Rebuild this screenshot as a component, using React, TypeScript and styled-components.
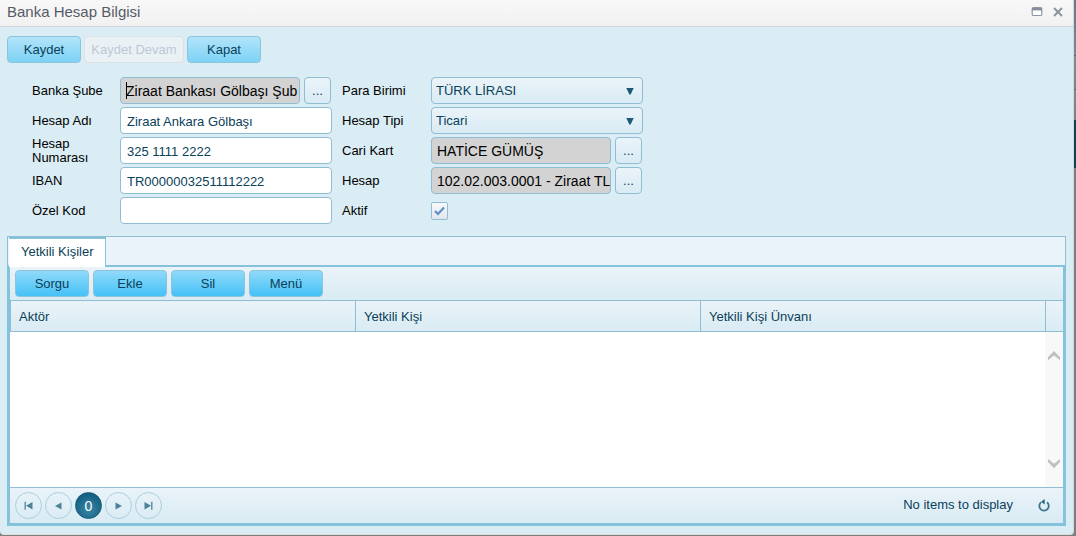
import React, { useState } from 'react';
import styled, { createGlobalStyle, css } from 'styled-components';

const Global = createGlobalStyle`
  *, *::before, *::after { box-sizing: border-box; }
  html, body { margin: 0; padding: 0; }
  body { background: #7d7f82; font-family: "Liberation Sans", Arial, sans-serif; font-size: 13px; color: #000; }
  button, input, select { font-family: inherit; margin: 0; }
`;

const line = '#8fbdd2';
const frame = '#85c3dd';
const ink = '#0a4159';
const panel = 'linear-gradient(#eaf3f9, #d9ebf3)';

const Backdrop = styled.div`
  min-height: 100vh;
  padding: 0 2px 1px 0;
  display: flex;
  background: linear-gradient(#6f7780, #7f8892 55px, #4f6f7d 55px 56px, #858a90 56px, #7d8287 89px, #4f6f7d 89px 90px, #858687 90px, #7f8081 120px, #143f55 120px 168px, #807d7c 168px);
`;

const Window = styled.main`
  flex: 1;
  min-width: 0;
  display: flex;
  flex-direction: column;
  background: #daecf4;
  border-right: 1px solid #c9dbe3;
  border-bottom: 1px solid #d9dddf;
  border-radius: 0 0 4px 4px;
`;

const TitleBar = styled.header`
  display: flex;
  align-items: center;
  height: 27px;
  padding: 0 9px 2px 7px;
  background: linear-gradient(#f8f8f8, #f1f1f1);
  border-bottom: 1px solid #d3d6d8;
`;

const Title = styled.h1`
  flex: 1;
  margin: 0;
  font-size: 15px;
  font-weight: 400;
  line-height: 20px;
  color: #555b66;
`;

const TitleTools = styled.div`
  display: flex;
  gap: 9px;
`;

const bare = css`
  display: flex;
  align-items: center;
  justify-content: center;
  padding: 0;
  border: 0;
  background: none;
  cursor: pointer;
`;

const TitleButton = styled.button`
  ${bare}
  width: 12px;
  height: 12px;
`;

const Toolbar = styled.div`
  display: flex;
  gap: 3px;
  padding: 9px 7px 0;
`;

const Button = styled.button<{ $strong?: boolean; $wide?: boolean }>`
  width: ${p => (p.$wide ? 100 : 74)}px;
  height: 27px;
  padding: 0;
  border: 1px solid #8fc3da;
  border-radius: 4px;
  background: ${p => (p.$strong ? 'linear-gradient(#90dafa, #45c1f6)' : 'linear-gradient(#b2e4fa, #7dd2f6)')};
  color: ${ink};
  font-size: 13px;
  line-height: ${p => (p.$strong ? 24 : 26)}px;
  white-space: nowrap;
  &:disabled {
    background: #eaf1f5;
    border-color: #dbe1e6;
    color: #bcc8d6;
  }
`;

const Form = styled.form`
  display: grid;
  grid-template-columns: 88px 212px 99px 212px;
  grid-template-rows: repeat(5, 27px);
  row-gap: 3px;
  align-items: center;
  padding: 14px 0 12px 32px;
`;

const Label = styled.label<{ $second?: boolean }>`
  padding-left: ${p => (p.$second ? 10 : 0)}px;
  font-size: 13px;
  line-height: 14px;
`;

const fieldBox = css`
  height: 27px;
  border: 1px solid ${line};
  border-radius: 4px;
  font-size: 13px;
  color: ${ink};
  outline: 0;
`;

const TextInput = styled.input`
  ${fieldBox}
  width: 100%;
  padding: 1px 6px 0;
  background: #fff;
`;

const Lookup = styled.div`
  display: flex;
  gap: 4px;
  padding-right: 1px;
`;

const LookupBox = styled.div`
  position: relative;
  flex: 1;
  min-width: 0;
`;

const LookupInput = styled.input`
  ${fieldBox}
  width: 100%;
  padding: 0 0 0 5px;
  background: #d3d3d3;
  color: #000;
  font-size: 14px;
`;

const Caret = styled.span`
  position: absolute;
  left: 6px;
  top: 5px;
  width: 1px;
  height: 17px;
  background: #000;
`;

const DotsButton = styled.button`
  width: 27px;
  height: 27px;
  padding: 0;
  border: 1px solid ${line};
  border-radius: 4px;
  background: ${panel};
  color: ${ink};
  font-size: 13px;
`;

const SelectWrap = styled.div`
  position: relative;
`;

const Select = styled.select`
  ${fieldBox}
  width: 100%;
  padding: 0 24px 0 4px;
  appearance: none;
  background: ${panel};
`;

const SelectArrow = styled.svg`
  position: absolute;
  right: 9px;
  top: 11px;
  pointer-events: none;
`;

const Check = styled.input`
  appearance: none;
  display: block;
  width: 17px;
  height: 18px;
  margin: 0;
  border: 1px solid ${line};
  border-radius: 2px;
  background: linear-gradient(#f7f9fb, #e2e6ed);
`;

const CheckWrap = styled.div`
  position: relative;
`;

const CheckMark = styled.svg`
  position: absolute;
  left: 3px;
  top: 4px;
  pointer-events: none;
`;

const Tabs = styled.section`
  flex: 1;
  display: flex;
  flex-direction: column;
  margin: 0 7px 8px;
`;

const TabStrip = styled.div`
  display: flex;
  height: 29px;
  padding-left: 1px;
  background: #eaf3fa;
  border: 1px solid ${line};
  border-bottom: 0;
`;

const Tab = styled.button`
  height: 30px;
  padding: 0 11px 4px 12px;
  border: 0;
  border-top: 2px solid ${frame};
  border-right: 1px solid ${frame};
  background: #fff;
  color: ${ink};
  font-size: 13px;
  z-index: 1;
`;

const TabPanel = styled.div`
  flex: 1;
  display: flex;
  flex-direction: column;
  border: 3px solid ${frame};
  border-top-width: 2px;
  background: #fff;
`;

const GridToolbar = styled.div`
  display: flex;
  gap: 4px;
  height: 33px;
  padding: 3px 5px;
  background: ${panel};
`;

const Table = styled.table`
  width: 100%;
  table-layout: fixed;
  border-collapse: separate;
  border-spacing: 0;
  background: ${panel};
  border-top: 1px solid ${line};
  border-bottom: 1px solid ${line};
`;

const Th = styled.th`
  height: 30px;
  padding: 0 8px;
  border-left: 1px solid ${line};
  text-align: left;
  font-size: 13px;
  font-weight: 400;
  color: ${ink};
`;

const GutterTh = styled.th`
  width: 18px;
  padding: 0;
  border-left: 1px solid ${line};
`;

const GridBody = styled.div`
  flex: 1;
  min-height: 155px;
  display: flex;
  justify-content: flex-end;
`;

const ScrollTrack = styled.div`
  width: 18px;
  display: flex;
  flex-direction: column;
  justify-content: space-between;
  padding: 17px 0;
  background: #f8f8f8;
`;

const ScrollButton = styled.button`
  ${bare}
  width: 18px;
  height: 12px;
`;

const Pager = styled.footer`
  display: flex;
  align-items: center;
  gap: 3px;
  height: 36px;
  padding: 0 12px 0 5px;
  background: ${panel};
  border-top: 1px solid ${line};
`;

const PageButton = styled.button<{ $current?: boolean }>`
  ${bare}
  width: 27px;
  height: 27px;
  border: 1px solid ${p => (p.$current ? '#135c7d' : '#a9cfdf')};
  border-radius: 50%;
  background: ${p => (p.$current ? 'radial-gradient(circle at 50% 65%, #3d87a5, #135f82 75%)' : 'transparent')};
  color: #fff;
  font-size: 14px;
`;

const PagerInfo = styled.span`
  margin-left: auto;
  margin-right: 21px;
  color: ${ink};
  line-height: 16px;
  padding-bottom: 1px;
`;

const RefreshButton = styled.button`
  ${bare}
  width: 14px;
  height: 14px;
`;

function Icon({ w, h, children }: { w: number; h: number; children: React.ReactNode }) {
  return <svg width={w} height={h} viewBox={`0 0 ${w} ${h}`} aria-hidden="true">{children}</svg>;
}

function LookupField({ id, value, caret }: { id: string; value: string; caret?: boolean }) {
  return (
    <Lookup>
      <LookupBox>
        <LookupInput id={id} readOnly value={value} />
        {caret && <Caret />}
      </LookupBox>
      <DotsButton type="button">...</DotsButton>
    </Lookup>
  );
}

function SelectField({ id, options }: { id: string; options: string[] }) {
  return (
    <SelectWrap>
      <Select id={id}>
        {options.map(o => <option key={o}>{o}</option>)}
      </Select>
      <SelectArrow width="8" height="7" viewBox="0 0 8 7"><path d="M0.3 0H7.7L4.6 6.5H3.4Z" fill="#1a5a75" /></SelectArrow>
    </SelectWrap>
  );
}

export default function App() {
  const [active, setActive] = useState(true);
  const columns = ['Aktör', 'Yetkili Kişi', 'Yetkili Kişi Ünvanı'];
  return (
    <>
      <Global />
      <Backdrop>
        <Window>
          <TitleBar>
            <Title>Banka Hesap Bilgisi</Title>
            <TitleTools>
              <TitleButton type="button">
                <Icon w={12} h={12}>
                  <rect x="1.2" y="1.7" width="9.6" height="7.8" rx="1.3" fill="#fff" stroke="#8d96a1" strokeWidth="1.2" />
                  <path d="M1 3.2H11" stroke="#858e9a" strokeWidth="2.4" />
                </Icon>
              </TitleButton>
              <TitleButton type="button">
                <Icon w={12} h={12}><path d="M2 2L10 10M10 2L2 10" stroke="#8a929d" strokeWidth="1.9" /></Icon>
              </TitleButton>
            </TitleTools>
          </TitleBar>

          <Toolbar>
            <Button type="button">Kaydet</Button>
            <Button type="button" $wide disabled>Kaydet Devam</Button>
            <Button type="button">Kapat</Button>
          </Toolbar>

          <Form>
            <Label htmlFor="sube">Banka Şube</Label>
            <LookupField id="sube" value="Ziraat Bankası Gölbaşı Şub" caret />
            <Label $second htmlFor="para">Para Birimi</Label>
            <SelectField id="para" options={['TÜRK LİRASI']} />

            <Label htmlFor="ad">Hesap Adı</Label>
            <TextInput id="ad" defaultValue="Ziraat Ankara Gölbaşı" />
            <Label $second htmlFor="tip">Hesap Tipi</Label>
            <SelectField id="tip" options={['Ticari']} />

            <Label htmlFor="no">Hesap<br />Numarası</Label>
            <TextInput id="no" defaultValue="325 1111 2222" />
            <Label $second htmlFor="cari">Cari Kart</Label>
            <LookupField id="cari" value="HATİCE GÜMÜŞ" />

            <Label htmlFor="iban">IBAN</Label>
            <TextInput id="iban" defaultValue="TR00000032511112222" />
            <Label $second htmlFor="hesap">Hesap</Label>
            <LookupField id="hesap" value="102.02.003.0001 - Ziraat TL" />

            <Label htmlFor="kod">Özel Kod</Label>
            <TextInput id="kod" />
            <Label $second htmlFor="aktif">Aktif</Label>
            <CheckWrap>
              <Check id="aktif" type="checkbox" checked={active} onChange={e => setActive(e.target.checked)} />
              {active && (
                <CheckMark width="11" height="10" viewBox="0 0 11 10">
                  <path d="M1 5L4 8L10 1.5" fill="none" stroke="#5c8fc6" strokeWidth="2.2" />
                </CheckMark>
              )}
            </CheckWrap>
          </Form>

          <Tabs>
            <TabStrip role="tablist">
              <Tab type="button" role="tab" aria-selected="true">Yetkili Kişiler</Tab>
            </TabStrip>
            <TabPanel role="tabpanel">
              <GridToolbar>
                {['Sorgu', 'Ekle', 'Sil', 'Menü'].map(t => <Button key={t} type="button" $strong>{t}</Button>)}
              </GridToolbar>
              <Table>
                <thead>
                  <tr>
                    {columns.map(c => <Th key={c} scope="col">{c}</Th>)}
                    <GutterTh />
                  </tr>
                </thead>
              </Table>
              <GridBody>
                <ScrollTrack>
                  <ScrollButton type="button">
                    <Icon w={14} h={12}><path d="M1 8.2L7 2L13 8.2V11.2L7 6.4L1 11.2Z" fill="#c0c0c0" /></Icon>
                  </ScrollButton>
                  <ScrollButton type="button">
                    <Icon w={14} h={12}><path d="M1 4V1L7 5.8L13 1V4L7 10.2Z" fill="#c0c0c0" /></Icon>
                  </ScrollButton>
                </ScrollTrack>
              </GridBody>
              <Pager>
                <PageButton type="button"><Icon w={9} h={9}><path d="M1.2 0.8V8.8" stroke="#4f8299" strokeWidth="1.3" /><path d="M8.5 1V8.6L2 4.8Z" fill="#4f8299" /></Icon></PageButton>
                <PageButton type="button"><Icon w={9} h={9}><path d="M7.5 1.5V8.5L1 5Z" fill="#4f8299" /></Icon></PageButton>
                <PageButton type="button" $current>0</PageButton>
                <PageButton type="button"><Icon w={9} h={9}><path d="M1.5 1.5V8.5L8 5Z" fill="#4f8299" /></Icon></PageButton>
                <PageButton type="button"><Icon w={9} h={9}><path d="M7.8 0.8V8.8" stroke="#4f8299" strokeWidth="1.3" /><path d="M0.5 1V8.6L7 4.8Z" fill="#4f8299" /></Icon></PageButton>
                <PagerInfo>No items to display</PagerInfo>
                <RefreshButton type="button">
                  <Icon w={14} h={14}>
                    <path d="M10 3.2A4.7 4.7 0 1 1 4.2 3.1" fill="none" stroke="#3a748c" strokeWidth="1.8" />
                    <path d="M7.6 0V5.6L4.4 2.8Z" fill="#1a5a75" />
                  </Icon>
                </RefreshButton>
              </Pager>
            </TabPanel>
          </Tabs>
        </Window>
      </Backdrop>
    </>
  );
}
